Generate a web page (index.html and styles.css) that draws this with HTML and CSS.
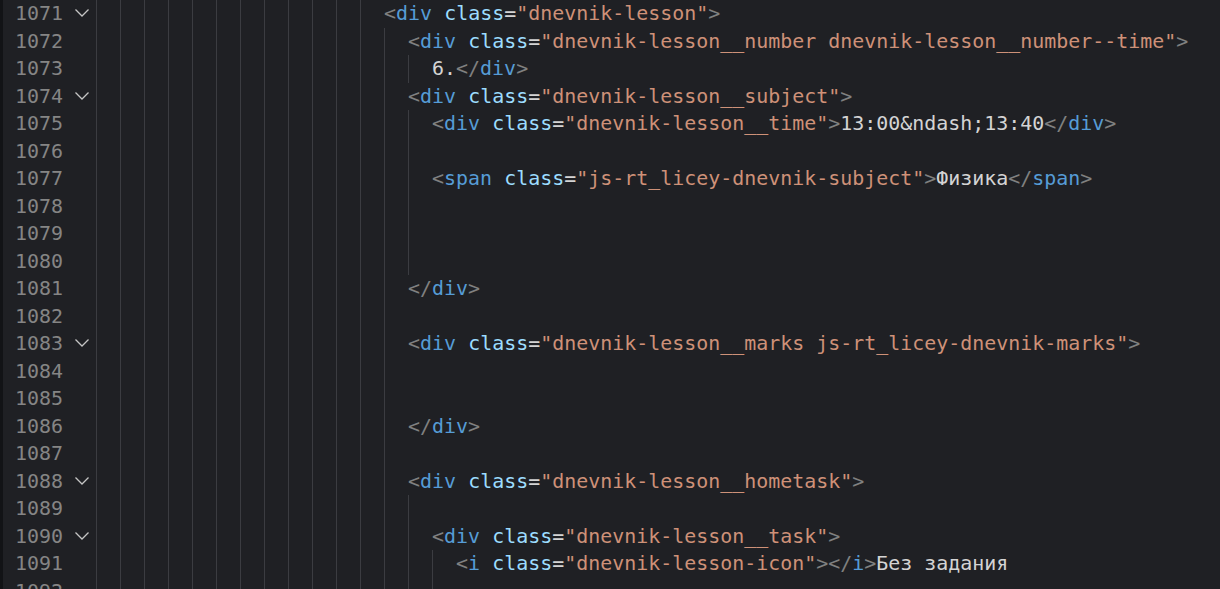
FILE: index.html
```html
<!DOCTYPE html>
<html lang="ru">
<head>
<meta charset="utf-8">
<title>Editor</title>
<link rel="stylesheet" href="styles.css">
</head>
<body>
<div class="editor">
  <div class="line"><span class="ln">1071</span><span class="fold"><svg viewBox="0 0 16 16"><path d="M1.5 4.5 L8 11 L14.5 4.5"/></svg></span><div class="code"><span class="p">&lt;</span><span class="t">div</span> <span class="a">class</span><span class="e">=</span><span class="s">"dnevnik-lesson"</span><span class="p">&gt;</span></div></div>
  <div class="line"><span class="ln">1072</span><span class="fold"></span><div class="code"><span class="g"></span><span class="p">&lt;</span><span class="t">div</span> <span class="a">class</span><span class="e">=</span><span class="s">"dnevnik-lesson__number dnevnik-lesson__number--time"</span><span class="p">&gt;</span></div></div>
  <div class="line"><span class="ln">1073</span><span class="fold"></span><div class="code"><span class="g"></span><span class="g"></span><span class="x">6.</span><span class="p">&lt;/</span><span class="t">div</span><span class="p">&gt;</span></div></div>
  <div class="line"><span class="ln">1074</span><span class="fold"><svg viewBox="0 0 16 16"><path d="M1.5 4.5 L8 11 L14.5 4.5"/></svg></span><div class="code"><span class="g"></span><span class="p">&lt;</span><span class="t">div</span> <span class="a">class</span><span class="e">=</span><span class="s">"dnevnik-lesson__subject"</span><span class="p">&gt;</span></div></div>
  <div class="line"><span class="ln">1075</span><span class="fold"></span><div class="code"><span class="g"></span><span class="g"></span><span class="p">&lt;</span><span class="t">div</span> <span class="a">class</span><span class="e">=</span><span class="s">"dnevnik-lesson__time"</span><span class="p">&gt;</span><span class="x">13:00&amp;ndash;13:40</span><span class="p">&lt;/</span><span class="t">div</span><span class="p">&gt;</span></div></div>
  <div class="line"><span class="ln">1076</span><span class="fold"></span><div class="code"><span class="g"></span><span class="g"></span></div></div>
  <div class="line"><span class="ln">1077</span><span class="fold"></span><div class="code"><span class="g"></span><span class="g"></span><span class="p">&lt;</span><span class="t">span</span> <span class="a">class</span><span class="e">=</span><span class="s">"js-rt_licey-dnevnik-subject"</span><span class="p">&gt;</span><span class="x">Физика</span><span class="p">&lt;/</span><span class="t">span</span><span class="p">&gt;</span></div></div>
  <div class="line"><span class="ln">1078</span><span class="fold"></span><div class="code"><span class="g"></span><span class="g"></span></div></div>
  <div class="line"><span class="ln">1079</span><span class="fold"></span><div class="code"><span class="g"></span><span class="g"></span></div></div>
  <div class="line"><span class="ln">1080</span><span class="fold"></span><div class="code"><span class="g"></span><span class="g"></span></div></div>
  <div class="line"><span class="ln">1081</span><span class="fold"></span><div class="code"><span class="g"></span><span class="p">&lt;/</span><span class="t">div</span><span class="p">&gt;</span></div></div>
  <div class="line"><span class="ln">1082</span><span class="fold"></span><div class="code"><span class="g"></span></div></div>
  <div class="line"><span class="ln">1083</span><span class="fold"><svg viewBox="0 0 16 16"><path d="M1.5 4.5 L8 11 L14.5 4.5"/></svg></span><div class="code"><span class="g"></span><span class="p">&lt;</span><span class="t">div</span> <span class="a">class</span><span class="e">=</span><span class="s">"dnevnik-lesson__marks js-rt_licey-dnevnik-marks"</span><span class="p">&gt;</span></div></div>
  <div class="line"><span class="ln">1084</span><span class="fold"></span><div class="code"><span class="g"></span></div></div>
  <div class="line"><span class="ln">1085</span><span class="fold"></span><div class="code"><span class="g"></span></div></div>
  <div class="line"><span class="ln">1086</span><span class="fold"></span><div class="code"><span class="g"></span><span class="p">&lt;/</span><span class="t">div</span><span class="p">&gt;</span></div></div>
  <div class="line"><span class="ln">1087</span><span class="fold"></span><div class="code"><span class="g"></span></div></div>
  <div class="line"><span class="ln">1088</span><span class="fold"><svg viewBox="0 0 16 16"><path d="M1.5 4.5 L8 11 L14.5 4.5"/></svg></span><div class="code"><span class="g"></span><span class="p">&lt;</span><span class="t">div</span> <span class="a">class</span><span class="e">=</span><span class="s">"dnevnik-lesson__hometask"</span><span class="p">&gt;</span></div></div>
  <div class="line"><span class="ln">1089</span><span class="fold"></span><div class="code"><span class="g"></span><span class="g"></span></div></div>
  <div class="line"><span class="ln">1090</span><span class="fold"><svg viewBox="0 0 16 16"><path d="M1.5 4.5 L8 11 L14.5 4.5"/></svg></span><div class="code"><span class="g"></span><span class="g"></span><span class="p">&lt;</span><span class="t">div</span> <span class="a">class</span><span class="e">=</span><span class="s">"dnevnik-lesson__task"</span><span class="p">&gt;</span></div></div>
  <div class="line"><span class="ln">1091</span><span class="fold"></span><div class="code"><span class="g"></span><span class="g"></span><span class="g"></span><span class="p">&lt;</span><span class="t">i</span> <span class="a">class</span><span class="e">=</span><span class="s">"dnevnik-lesson-icon"</span><span class="p">&gt;&lt;/</span><span class="t">i</span><span class="p">&gt;</span><span class="x">Без задания</span></div></div>
  <div class="line"><span class="ln">1092</span><span class="fold"></span><div class="code"><span class="g"></span><span class="g"></span><span class="g"></span></div></div>
</div>
</body>
</html>
```
FILE: styles.css
```css
html, body {
  margin: 0;
  padding: 0;
  background: #1f2024;
  overflow: hidden;
}
.editor {
  height: 589px;
  overflow: hidden;
  border-left: 3px solid #121316;
  font-family: "DejaVu Sans Mono", "Liberation Mono", monospace;
  font-size: 19.94px;
  color: #d4d4d4;
}
.line {
  display: flex;
  align-items: stretch;
  height: 27.5px;
  line-height: 27.5px;
  white-space: pre;
}
.ln {
  width: 60px;
  text-align: right;
  color: #858585;
  flex: none;
}
.fold {
  width: 33px;
  flex: none;
  display: flex;
  align-items: center;
  padding-left: 11px;
  box-sizing: border-box;
}
.fold svg {
  width: 16px;
  height: 16px;
  margin-top: -1px;
}
.fold path {
  fill: none;
  stroke: #c5c5c5;
  stroke-width: 1.3;
}
.code {
  flex: 1;
  display: block;
  height: 27.5px;
  padding-left: 24ch;
  background-image: repeating-linear-gradient(to right, #3b3c41 0 1px, transparent 1px 2ch);
  background-size: 24ch 100%;
  background-repeat: no-repeat;
}
.g {
  display: inline-block;
  width: 2ch;
  height: 27.5px;
  vertical-align: top;
  box-sizing: border-box;
  border-left: 1px solid #3b3c41;
}
.p { color: #808080; }
.t { color: #569cd6; }
.a { color: #9cdcfe; }
.e { color: #d4d4d4; }
.s { color: #ce9178; }
.x { color: #d4d4d4; }
```
